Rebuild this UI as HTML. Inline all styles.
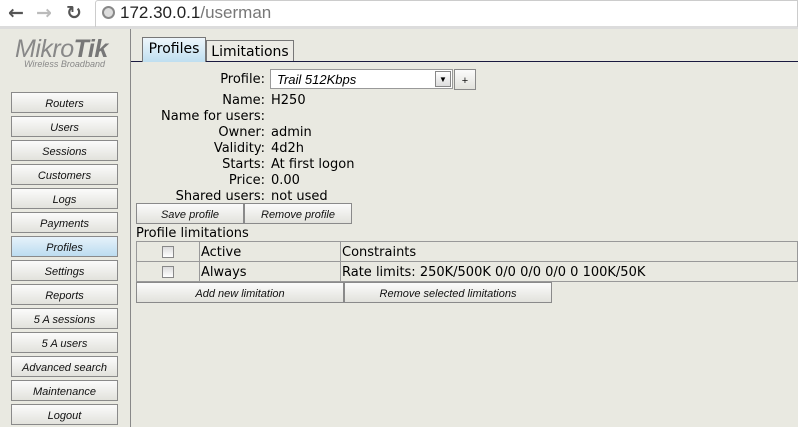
<!DOCTYPE html>
<html><head><style>
*{margin:0;padding:0;box-sizing:border-box}
body{width:798px;height:427px;overflow:hidden;background:#e9e9e1;font-family:"DejaVu Sans",Verdana,sans-serif;font-size:13px;color:#000;position:relative}
.top{position:absolute;left:0;top:0;width:798px;height:29px;background:#fff;border-bottom:3px solid #dcdcdc}
.nav{position:absolute;top:2px;font-family:"DejaVu Sans",sans-serif;font-size:19px;color:#555;font-weight:bold}
.url{position:absolute;left:120px;top:3px;font-family:"Liberation Sans",sans-serif;font-size:17px;color:#222}
.url span{color:#777}
.side{position:absolute;left:0;top:29px;width:131px;height:398px;border-right:1px solid #888}
.logo{position:absolute;left:15px;top:35px;font-family:"Liberation Sans",sans-serif;font-style:italic;font-size:25px;color:#888;letter-spacing:-0.5px}
.logo b{color:#777;font-weight:900}
.sub{position:absolute;left:24px;top:59px;font-family:"Liberation Sans",sans-serif;font-style:italic;font-size:9px;color:#888}
.btn{position:absolute;height:21px;border:1px solid #8a8a8a;background:linear-gradient(#fbfbfb,#e2e2dc);font-family:"Liberation Sans",sans-serif;font-style:italic;font-size:11px;text-align:center;line-height:19px;padding-top:2px;color:#111}
.sb{left:11px;width:107px}
.sel{background:linear-gradient(#e6f2fa,#bcdcf0)}
.tab{position:absolute;top:38px;height:24px;border:1px solid #777;border-bottom:none;font-size:14px;text-align:center;line-height:22px}
.line{position:absolute;left:131px;top:61px;width:667px;height:1px;background:#1a1a40}
.lab{position:absolute;right:533px;text-align:right;white-space:nowrap}
.val{position:absolute;left:271px;white-space:nowrap}
table{position:absolute;left:136px;top:241px;border-collapse:collapse;width:662px}
td{border:1px solid #999;height:20px;padding:1px 1px 0;font-size:13px;white-space:nowrap}
.cb{display:inline-block;width:12px;height:12px;border:1px solid #888;background:linear-gradient(#ddd,#fff);vertical-align:middle}
</style></head><body>
<div class="top">
<div class="nav" style="left:8px">&#8592;</div>
<div class="nav" style="left:36px;color:#bbb">&#8594;</div>
<div class="nav" style="left:66px">&#8635;</div>
<div style="position:absolute;left:95px;top:0;width:703px;height:27px;border:1px solid #ccc;border-bottom:none;border-radius:3px 0 0 0"></div>
<div style="position:absolute;left:102px;top:6px;width:13px;height:13px;border-radius:50%;border:2px solid #888;background:#ddd"></div>
<div class="url">172.30.0.1<span>/userman</span></div>
</div>
<div class="side"></div>
<div class="logo">Mikro<b>Tik</b></div>
<div class="sub">Wireless Broadband</div>
<div class="btn sb" style="top:92px">Routers</div>
<div class="btn sb" style="top:116px">Users</div>
<div class="btn sb" style="top:140px">Sessions</div>
<div class="btn sb" style="top:164px">Customers</div>
<div class="btn sb" style="top:188px">Logs</div>
<div class="btn sb" style="top:212px">Payments</div>
<div class="btn sb sel" style="top:236px">Profiles</div>
<div class="btn sb" style="top:260px">Settings</div>
<div class="btn sb" style="top:284px">Reports</div>
<div class="btn sb" style="top:308px">5 A sessions</div>
<div class="btn sb" style="top:332px">5 A users</div>
<div class="btn sb" style="top:356px">Advanced search</div>
<div class="btn sb" style="top:380px">Maintenance</div>
<div class="btn sb" style="top:404px">Logout</div>
<div class="tab" style="left:142px;width:64px;top:37px;height:25px;background:linear-gradient(#eef6fb,#bfdff0);z-index:2">Profiles</div>
<div class="tab" style="left:206px;width:88px;background:#ecebe5;top:40px;height:22px;line-height:20px;padding-top:1px">Limitations</div>
<div class="line"></div>
<div class="lab" style="top:72px">Profile:</div>
<div style="position:absolute;left:270px;top:69px;width:183px;height:20px;background:#fff;border:1px solid #999;font-family:'Liberation Sans',sans-serif;font-style:italic;font-size:13px;line-height:18px;padding:1px 0 0 6px">Trail 512Kbps
<div style="position:absolute;right:1px;top:1px;width:16px;height:16px;border:1px solid #888;background:linear-gradient(#fff,#ddd);font-size:8px;font-style:normal;text-align:center;line-height:15px">&#9660;</div></div>
<div class="btn" style="left:454px;top:69px;width:22px;height:21px;font-style:normal">+</div>
<div class="lab" style="top:93px">Name:</div><div class="val" style="top:93px">H250</div>
<div class="lab" style="top:109px">Name for users:</div>
<div class="lab" style="top:125px">Owner:</div><div class="val" style="top:125px">admin</div>
<div class="lab" style="top:141px">Validity:</div><div class="val" style="top:141px">4d2h</div>
<div class="lab" style="top:157px">Starts:</div><div class="val" style="top:157px">At first logon</div>
<div class="lab" style="top:173px">Price:</div><div class="val" style="top:173px">0.00</div>
<div class="lab" style="top:189px">Shared users:</div><div class="val" style="top:189px">not used</div>
<div class="btn" style="left:136px;top:203px;width:108px">Save profile</div>
<div class="btn" style="left:244px;top:203px;width:108px">Remove profile</div>
<div style="position:absolute;left:136px;top:226px">Profile limitations</div>
<table>
<tr><td style="width:63px;text-align:center"><span class="cb"></span></td><td style="width:141px">Active</td><td>Constraints</td></tr>
<tr><td style="text-align:center"><span class="cb"></span></td><td>Always</td><td>Rate limits: 250K/500K 0/0 0/0 0/0 0 100K/50K</td></tr>
</table>
<div class="btn" style="left:136px;top:282px;width:208px">Add new limitation</div>
<div class="btn" style="left:344px;top:282px;width:208px">Remove selected limitations</div>
</body></html>
